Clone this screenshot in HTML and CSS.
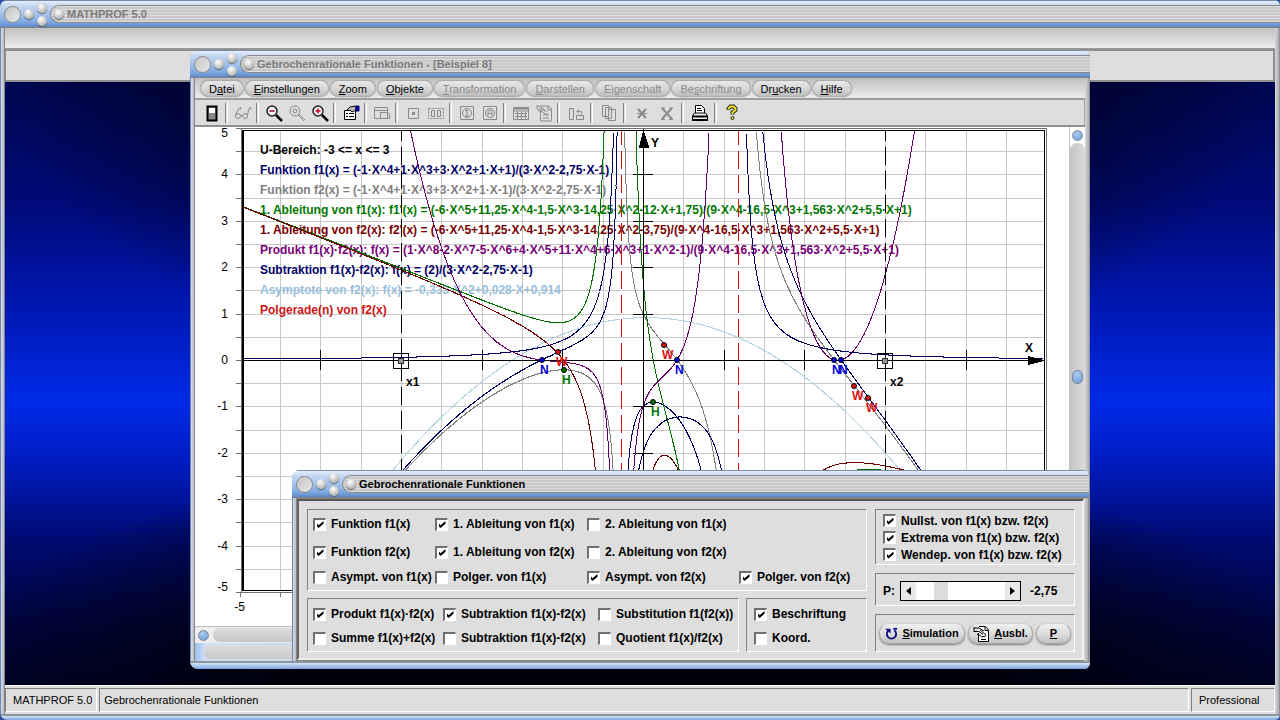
FILE: index.html
```html
<!DOCTYPE html>
<html lang="de">
<head>
    <meta charset="UTF-8">
    <meta name="viewport" content="width=device-width, initial-scale=1.0">
    <title>MATHPROF 5.0</title>
    <link rel="stylesheet" href="styles.css">
</head>
<body>
    <div class="window app">
        <header class="titlebar">
            <i class="knob big"></i><i class="knob"></i>
            <span class="pair"><i class="knob"></i><i class="knob"></i></span>
            <div class="caption off"><i class="knob"></i><span>MATHPROF 5.0</span></div>
        </header>
        <div class="app-body">
            <div class="menu-strip"></div>
            <div class="app-tools"></div>
            <main class="desktop"></main>
            <footer class="status">
                <span>MATHPROF 5.0</span>
                <span class="grow">Gebrochenrationale Funktionen</span>
                <span class="edition">Professional</span>
            </footer>
        </div>
        <div class="app-edge"></div>
    </div>

    <!-- Grafikfenster -->
    <section class="window graph">
        <header class="titlebar">
            <i class="knob big"></i><i class="knob"></i>
            <span class="pair"><i class="knob"></i><i class="knob"></i></span>
            <div class="caption off"><i class="knob"></i><span>Gebrochenrationale Funktionen - [Beispiel 8]</span></div>
        </header>
        <div class="window-body">
            <nav class="menu-strip">
                <button>D<u>a</u>tei</button>
                <button><u>E</u>instellungen</button>
                <button><u>Z</u>oom</button>
                <button><u>O</u>bjekte</button>
                <button disabled><u>T</u>ransformation</button>
                <button disabled><u>D</u>arstellen</button>
                <button disabled>Ei<u>g</u>enschaft</button>
                <button disabled>Be<u>s</u>chriftung</button>
                <button>Dr<u>u</u>cken</button>
                <button><u>H</u>ilfe</button>
            </nav>
            <div class="toolbar">
                <button aria-label="Beenden"><svg viewBox="0 0 18 18"><path d="M4.500 2.500h9v14h-9z" fill="#888" stroke="#000" stroke-width="2"/><path d="M6 4h6v5H6z" fill="#fff"/></svg></button>
                <i class="sep"></i>
                <button disabled aria-label="Ansicht"><svg viewBox="0 0 18 18" fill="none" stroke="#8a8a8a"><circle cx="4" cy="12" r="2.500"/><circle cx="11" cy="12" r="2.500"/><path d="M6.500 11.500h2M1.500 11L5 4.500l1.500-1v2M13.500 11L15 4.500l2-1v2"/></svg></button>
                <i class="sep"></i>
                <button aria-label="Verkleinern"><svg viewBox="0 0 18 18" fill="none"><circle cx="7" cy="7" r="5" stroke="#222" stroke-width="1.500" fill="#f4f4f4"/><path d="M11 11l6 6" stroke="#000" stroke-width="2.500"/><path d="M4.500 7h5" stroke="#a00020" stroke-width="1.500"/></svg></button>
                <button disabled aria-label="Zoom"><svg viewBox="0 0 18 18" fill="none" stroke="#8a8a8a"><circle cx="7" cy="7" r="5"/><circle cx="7" cy="7" r="2"/><path d="M11 10l6 6M10 11l6 6"/></svg></button>
                <button aria-label="Vergrößern"><svg viewBox="0 0 18 18" fill="none"><circle cx="7" cy="7" r="5" stroke="#222" stroke-width="1.500" fill="#f4f4f4"/><path d="M11 11l6 6" stroke="#000" stroke-width="2.500"/><path d="M4.500 7h5M7 4.500v5" stroke="#d00020" stroke-width="1.500"/></svg></button>
                <i class="sep"></i>
                <button aria-label="Eigenschaften"><svg viewBox="0 0 18 18" fill="none" stroke="#000"><path d="M2.500 6.500h11v9h-11z" fill="#fff"/><path d="M4 9.500h2M7 9.500h5M4 12.500h2M7 12.500h5"/><path d="M5 6l3-3 6-1v4l-4 2-2-2" fill="#bbb"/><path d="M14 2h3v5h-3z" fill="#000080" stroke="#000080"/></svg></button>
                <i class="sep"></i>
                <button disabled aria-label="Fenster"><svg viewBox="0 0 18 18" fill="none" stroke="#8a8a8a"><path d="M1.500 3.500h13v11h-13zM1.500 6.500h13M7.500 8.500h7l2 2v4h-9z"/></svg></button>
                <i class="sep"></i>
                <button disabled aria-label="Punkt"><svg viewBox="0 0 18 18" fill="none" stroke="#8a8a8a"><path d="M4.500 4.500h10v10h-10z"/><path d="M8 8h3v3H8z" fill="#8a8a8a" stroke="none"/></svg></button>
                <button disabled aria-label="Punkte"><svg viewBox="0 0 18 18" fill="none" stroke="#8a8a8a"><path d="M1.500 4.500h15v10h-15z" stroke-dasharray="2 1"/><path d="M4.500 6.500h3v6h-3zM10.500 6.500h3v6h-3z"/></svg></button>
                <i class="sep"></i>
                <button disabled aria-label="Info"><svg viewBox="0 0 18 18" fill="none" stroke="#8a8a8a"><path d="M2.500 2.500h13v13h-13z"/><circle cx="9" cy="9" r="4.500"/><path d="M7 6.500h3M9 6v6M7 12h4"/></svg></button>
                <button disabled aria-label="Text"><svg viewBox="0 0 18 18" fill="none" stroke="#8a8a8a"><path d="M2.500 2.500h13v13h-13z"/><circle cx="9" cy="9" r="4.500"/><path d="M7 12V7l2-1 2 1v5M7 9.500h4"/></svg></button>
                <i class="sep"></i>
                <button disabled aria-label="Wertetabelle"><svg viewBox="0 0 18 18" fill="none" stroke="#8a8a8a"><path d="M1.500 3.500h15v12h-15zM1.500 7h15M3 9.500h12M3 12.500h12M5.500 8v7M9.500 8v7M13.500 8v7"/><path d="M2 4.500h14" stroke-width="2"/></svg></button>
                <button disabled aria-label="Protokoll"><svg viewBox="0 0 18 18" fill="none" stroke="#8a8a8a"><path d="M5.500 7v10h11V5l-3-3h-12l2 5h3M13 2v4h4M4 4l6 3M6 3l6 5M8 11l6-1M8 14h6M5 6l8 6"/></svg></button>
                <i class="sep"></i>
                <button disabled class="wide" aria-label="Tauschen"><svg viewBox="0 0 18 18" fill="none" stroke="#8a8a8a"><path d="M2.500 4.500h4v11h-4zM9.500 11.500h7v4h-7zM10 7.500h4.500v3M12 5l-2 2.500 2 2"/></svg></button>
                <i class="sep"></i>
                <button disabled class="wide" aria-label="Seiten"><svg viewBox="0 0 18 18" fill="none" stroke="#8a8a8a"><path d="M2.500 1.500h6v11h-6zM5.500 3.500h6v11h-6zM8.500 5.500h7v11h-7z" fill="#dedede"/></svg></button>
                <i class="sep"></i>
                <button disabled class="wide" aria-label="Löschen"><svg viewBox="0 0 18 18" fill="none" stroke="#8a8a8a"><path d="M5 5l8 9M13 5l-8 9" stroke-width="2"/><path d="M4 9.500h10"/></svg></button>
                <button disabled class="wide" aria-label="Alles löschen"><svg viewBox="0 0 18 18" fill="none" stroke="#8a8a8a"><path d="M4 4l10 11M14 4L4 15" stroke-width="2"/><path d="M3 4h4M11 4h4M3 15.500h4M11 15.500h4"/></svg></button>
                <i class="sep"></i>
                <button class="wide" aria-label="Drucken"><svg viewBox="0 0 18 18" fill="none" stroke="#000"><path d="M4.500 9V1.500h6l3 3V9" fill="#fff"/><path d="M6 4.500h4M6 6.500h5"/><path d="M1.500 12l2-3h11l2 3v4h-15z" fill="#eee"/><path d="M1 12.500h16M1 16h16" stroke-width="2"/></svg></button>
                <i class="sep"></i>
                <button class="wide" aria-label="Hilfe"><svg viewBox="0 0 18 18" fill="none"><path d="M4.500 6V4.500l2-2h3l2 2V6L8.500 8.500v2" stroke="#222" stroke-width="4"/><path d="M4.500 5.500v-1l2-2h3l2 2V6L8.500 8.500V10" stroke="#f4e020" stroke-width="2"/><circle cx="8.500" cy="14" r="1.500" fill="#f4e020" stroke="#222"/></svg></button>
            </div>
            <div class="client">
                <svg id="plot" class="plot" width="874" height="499" viewBox="-448 -233 874 499">
                    <g id="grid" class="grid"></g>
                    <g class="frame">
                        <path class="thin" d="M-402 -231.500H403.500V232.500H-402z"/>
                        <path d="M-400 -229.500H401.500V230.500H-400z"/>
                        <path class="thick" d="M-400 -230V231"/>
                    </g>
                    <g id="scale" class="scale"></g>
                    <g class="legend">
                        <text x="-383" y="-206">U-Bereich: -3 &lt;= x &lt;= 3</text>
                        <text class="f1" x="-383" y="-186">Funktion f1(x) = (-1·X^4+1·X^3+3·X^2+1·X+1)/(3·X^2-2,75·X-1)</text>
                        <text class="f2" x="-383" y="-166">Funktion f2(x) = (-1·X^4+1·X^3+3·X^2+1·X-1)/(3·X^2-2,75·X-1)</text>
                        <text class="d1" x="-383" y="-146">1. Ableitung von f1(x): f1'(x) = (-6·X^5+11,25·X^4-1,5·X^3-14,25·X^2-12·X+1,75)/(9·X^4-16,5·X^3+1,563·X^2+5,5·X+1)</text>
                        <text class="d2" x="-383" y="-126">1. Ableitung von f2(x): f2'(x) = (-6·X^5+11,25·X^4-1,5·X^3-14,25·X^2-3,75)/(9·X^4-16,5·X^3+1,563·X^2+5,5·X+1)</text>
                        <text class="prod" x="-383" y="-106">Produkt f1(x)·f2(x): f(x) = (1·X^8-2·X^7-5·X^6+4·X^5+11·X^4+6·X^3+1·X^2-1)/(9·X^4-16,5·X^3+1,563·X^2+5,5·X+1)</text>
                        <text class="sub" x="-383" y="-86">Subtraktion f1(x)-f2(x): f(x) = (2)/(3·X^2-2,75·X-1)</text>
                        <text class="asy" x="-383" y="-66">Asymptote von f2(x): f(x) = -0,333·X^2+0,028·X+0,914</text>
                        <text class="pole" x="-383" y="-46">Polgerade(n) von f2(x)</text>
                    </g>
                    <g id="curves" class="curves"></g>
                    <g class="axes">
                        <path d="M-400 0.500H401M0.500 230V-229"/>
                        <path d="M401 0.500l-16 -4v8zM0.500 -229l-4 16h9z" fill="#000"/>
                        <text x="382" y="-8">X</text>
                        <text x="8" y="-213">Y</text>
                    </g>
                    <g class="bounds">
                        <path class="dash" d="M-241.500 -229V230M242.500 -229V230"/>
                        <path d="M-249.500 -6.500h15v15h-15zM234.500 -6.500h15v15h-15z"/>
                        <circle cx="-242" cy="1" r="3"/>
                        <circle cx="242" cy="1" r="3"/>
                        <text x="-237" y="26">x1</text>
                        <text x="247" y="26">x2</text>
                    </g>
                    <g id="marks" class="marks"></g>
                </svg>
                <div class="vscroll">
                    <button class="dot" aria-label="Nach oben"></button>
                    <div class="track"><i class="dot"></i></div>
                </div>
            </div>
            <div class="hscroll">
                <button class="dot" aria-label="Nach links"></button>
                <div class="track"></div>
            </div>
            <div class="hint"><div class="track"></div></div>
        </div>
        <div class="edge"></div>
    </section>

    <!-- Steuerdialog -->
    <section class="window dialog">
        <header class="titlebar">
            <i class="knob big"></i><i class="knob"></i>
            <span class="pair"><i class="knob"></i><i class="knob"></i></span>
            <div class="caption"><i class="knob"></i><span>Gebrochenrationale Funktionen</span></div>
        </header>
        <form class="panel">
            <div class="left">
                <div class="box functions">
                    <label><input type="checkbox" checked>Funktion f1(x)</label>
                    <label><input type="checkbox" checked>1. Ableitung von f1(x)</label>
                    <label class="last"><input type="checkbox">2. Ableitung von f1(x)</label>
                    <label><input type="checkbox" checked>Funktion f2(x)</label>
                    <label><input type="checkbox" checked>1. Ableitung von f2(x)</label>
                    <label class="last"><input type="checkbox">2. Ableitung von f2(x)</label>
                    <label><input type="checkbox">Asympt. von f1(x)</label>
                    <label><input type="checkbox">Polger. von f1(x)</label>
                    <label><input type="checkbox" checked>Asympt. von f2(x)</label>
                    <label><input type="checkbox" checked>Polger. von f2(x)</label>
                </div>
                <div class="row">
                    <div class="box combos">
                        <label><input type="checkbox" checked>Produkt f1(x)·f2(x)</label>
                        <label><input type="checkbox" checked>Subtraktion f1(x)-f2(x)</label>
                        <label><input type="checkbox">Substitution f1(f2(x))</label>
                        <label><input type="checkbox">Summe f1(x)+f2(x)</label>
                        <label><input type="checkbox">Subtraktion f1(x)-f2(x)</label>
                        <label><input type="checkbox">Quotient f1(x)/f2(x)</label>
                    </div>
                    <div class="box captions">
                        <label><input type="checkbox" checked>Beschriftung</label>
                        <label><input type="checkbox">Koord.</label>
                    </div>
                </div>
            </div>
            <div class="right">
                <div class="box points">
                    <label><input type="checkbox" checked>Nullst. von f1(x) bzw. f2(x)</label>
                    <label><input type="checkbox" checked>Extrema von f1(x) bzw. f2(x)</label>
                    <label><input type="checkbox" checked>Wendep. von f1(x) bzw. f2(x)</label>
                </div>
                <div class="box param">
                    <label for="p">P:</label>
                    <div class="slider">
                        <button type="button" aria-label="Kleiner"><svg viewBox="0 0 5 8"><path d="M5 0v8L0 4z"/></svg></button>
                        <input type="range" id="p" min="-5" max="5" step="0.05" value="-2.6">
                        <button type="button" aria-label="Größer"><svg viewBox="0 0 5 8"><path d="M0 0v8l5-4z"/></svg></button>
                    </div>
                    <output for="p">-2,75</output>
                </div>
                <div class="box actions">
                    <button type="button"><svg viewBox="0 0 14 14" fill="none"><path d="M4 3.500a5 5 0 1 0 6 0" stroke="#101080" stroke-width="2"/><path d="M0 2h6v5z" fill="#101080"/><path d="M9 2h4" stroke="#101080" stroke-width="2"/></svg><span><u>S</u>imulation</span></button>
                    <button type="button"><svg class="sheet" viewBox="0 0 17 17" fill="none" stroke="#000"><path d="M5.500 8v8.500h10V5l-3-3.500H6M12 2v3.500h4" fill="#fff"/><path d="M1 2v5M1 3h5l5 3M1 6.500h5l4 3M7 5l6 5M8 12l5-1M8 14.500h5M4 9l4 2"/></svg><span><u>A</u>usbl.</span></button>
                    <button type="button" class="short"><u>P</u></button>
                </div>
            </div>
        </form>
        <div class="edge"></div>
    </section>

    <script src="script.js"></script>
</body>
</html>
```
FILE: styles.css
```css
* {
    box-sizing: border-box;
}

body {
    margin: 0;
    height: 100vh;
    position: relative;
    overflow: hidden;
    background: #2f52a8;
    font: 11px/14px "Liberation Sans", Arial, sans-serif;
    color: #000;
}

button, input, output {
    font: inherit;
    color: inherit;
    margin: 0;
}

button {
    padding: 0;
    border: 0;
    background: none;
}

/* windows */
.window {
    display: flex;
    flex-direction: column;
    border-radius: 8px 6px 6px 8px;
    overflow: hidden;
    background: linear-gradient(90deg, #7088b8 0, #7088b8 1px, #d4dae8 1px, #b8bcc4 4px, #868686 4px, #868686 calc(100% - 5px), #d8d8d8 calc(100% - 5px), #a8acb4 calc(100% - 1px), #777 100%);
}

.app {
    height: 100vh;
}

.graph {
    position: absolute;
    left: 190px;
    top: 50px;
    width: 900px;
}

.dialog {
    position: absolute;
    left: 292px;
    top: 470px;
    width: 797px;
}

.titlebar {
    display: flex;
    align-items: center;
    gap: 3px;
    height: 28px;
    flex: none;
    padding-left: 4px;
    border-top: 1px solid #7c8ca8;
    border-bottom: 1px solid #808080;
    background: linear-gradient(#e4eefc 0, #c4d6f0 5px, #a0c0ea 14px, #78a4de 22px, #5c88c8 26px);
}

.knob {
    width: 10px;
    height: 10px;
    flex: none;
    border-radius: 50%;
    background: radial-gradient(circle at 40% 30%, #fff, #ccc 50%, #999);
    box-shadow: 0 1px 1px #566;
}

.knob.big {
    width: 17px;
    height: 17px;
    border: 1px solid #888;
    background: linear-gradient(135deg, #c4c4c4, #e8e8e8);
    box-shadow: none;
}

.pair {
    display: flex;
    flex-direction: column;
    gap: 3px;
}

.caption {
    flex: 1;
    display: flex;
    align-items: center;
    gap: 3px;
    height: 18px;
    padding-left: 3px;
    border: 1px solid #888;
    border-right: 0;
    border-radius: 9px 0 0 9px;
    background: repeating-linear-gradient(#dcdcdc 0, #dcdcdc 1px, #c8c8c8 1px, #c8c8c8 3px);
    font-weight: bold;
    font-size: 11px;
}

.caption.off {
    color: #7c7c7c;
}

.app-body {
    flex: 1;
    display: flex;
    flex-direction: column;
    margin: 0 5px;
}

.menu-strip {
    display: flex;
    gap: 1px;
    height: 21px;
    padding: 2px 5px 2px;
    background: linear-gradient(#c0c0c0, #ececec);
    border-bottom: 1px solid #999;
}

.menu-strip button {
    height: 17px;
    padding: 0 8px;
    border-radius: 9px;
    border: 1px solid #aaa;
    background: linear-gradient(#e8e8e8, #d4d4d4 60%, #bcbcbc);
    box-shadow: 0 0 1px #777;
}

.menu-strip button:disabled {
    color: #8a8a8a;
}

.app-tools {
    height: 33px;
    border: 2px solid #909090;
    border-left-width: 1px;
    background: #dedede;
}

.desktop {
    flex: 1;
    background:
        radial-gradient(ellipse 50% 50% at 50% 0, rgba(0, 0, 16, 0.8) 50%, transparent),
        radial-gradient(ellipse 55% 40% at 50% 100%, rgba(0, 0, 8, 0.9) 50%, transparent),
        linear-gradient(#000650, #000a78 20%, #0018b4 38%, #002ae8 53%, #001cc0 63%, #000a70 76%, #000440 90%, #000228);
}

.status {
    display: flex;
    gap: 2px;
    padding: 2px 0;
    background: #dedede;
    border-top: 1px solid #fff;
}

.status span {
    padding: 4px 4px 4px 7px;
    border: 1px solid #fff;
    border-color: #808080 #fff #fff #808080;
}

.status .grow {
    flex: 1;
    padding-left: 4px;
}

.status .edition {
    width: 84px;
}

.app-edge, .edge {
    height: 8px;
    flex: none;
    border-top: 2px solid #8c949c;
    background: linear-gradient(#d4e4f8, #7ca4dc);
}

.app-edge {
    height: 6px;
}

/* graph window */
.window-body {
    margin: 0 5px;
    background: #dedede;
}

.toolbar {
    display: flex;
    align-items: center;
    height: 28px;
    padding-left: 5px;
    border: 1px solid #a0a0a0;
    border-bottom: 2px solid #909090;
    border-left: 0;
    background: #dedede;
}

.toolbar button {
    display: flex;
    justify-content: center;
    width: 23px;
}

.toolbar .wide {
    width: 25px;
}

.toolbar svg {
    width: 18px;
    height: 18px;
}

.sep {
    width: 2px;
    height: 20px;
    margin: 0 3px 0 2px;
    border-left: 1px solid #808080;
    border-right: 1px solid #fff;
    box-sizing: content-box;
    width: 0;
    padding-left: 1px;
}

.client {
    display: flex;
    height: 499px;
    background: #fff;
}

.plot {
    flex: none;
    shape-rendering: crispEdges;
}

.plot text {
    font-size: 12px;
    font-weight: bold;
}

.plot path, .plot polyline {
    fill: none;
    stroke: #000;
}

.grid path { stroke: #c8c8c8; }
.frame .thin { stroke: #707070; }
.frame .thick { stroke-width: 2px; }
.scale path { stroke: #707070; }
.scale .cross { stroke: #000; }
.plot .scale text { font-weight: normal; text-anchor: end; }
.axes path[fill] { fill: #000; }
.bounds .dash { stroke-dasharray: 18 6; stroke-dashoffset: 8; }
.bounds circle { fill: #999; stroke: #333; }

.legend .f1, .legend .sub { fill: #000068; }
.legend .f2 { fill: #808080; }
.legend .d1 { fill: #007800; }
.legend .d2 { fill: #780000; }
.legend .prod { fill: #780078; }
.legend .asy { fill: #98c0dc; }
.legend .pole { fill: #cc1414; }

.curves .f1, .curves .sub { stroke: #000060; }
.curves .f2 { stroke: #808080; }
.curves .d1 { stroke: #007000; }
.curves .d2 { stroke: #700000; }
.curves .prod { stroke: #680068; }
.curves .asy { stroke: #b4d4e4; }
.curves .pole { stroke: #e01010; stroke-dasharray: 18 6; stroke-dashoffset: 4; }

.marks circle { stroke: #000; stroke-width: 1px; shape-rendering: auto; }
.marks .n { fill: #0000e0; }
.marks .h { fill: #007800; }
.marks .w { fill: #e01010; }

.vscroll {
    flex: 1;
    display: flex;
    flex-direction: column;
    align-items: center;
    gap: 2px;
    padding-top: 3px;
    border-left: 1px solid #c4c4c4;
}

.track {
    flex: 1;
    background: linear-gradient(90deg, #c4c4c4, #dadada);
}

.vscroll .track {
    width: 100%;
    display: flex;
    align-items: center;
    justify-content: center;
    padding-bottom: 16px;
    border-radius: 7px 7px 0 0;
}

.dot {
    width: 11px;
    height: 11px;
    flex: none;
    border-radius: 50%;
    border: 1px solid #889;
    background: radial-gradient(circle at 40% 30%, #a8ccf0, #6c9cd8);
}

.track .dot {
    height: 14px;
    border-radius: 5px;
}

.hscroll {
    display: flex;
    align-items: center;
    gap: 4px;
    height: 17px;
    padding-left: 3px;
    background: #eee;
    border-top: 1px solid #bbb;
}

.hscroll .track, .hint .track {
    height: 14px;
    border-radius: 7px 0 0 7px;
    background: linear-gradient(#dcdcdc, #c8c8c8);
}

.hint {
    display: flex;
    height: 18px;
    padding: 2px 0 2px 9px;
    background: linear-gradient(90deg, #9cc0ec, #d0dff4 10px, #bbb);
}

/* dialog */
.panel {
    display: flex;
    gap: 8px;
    margin: 1px 5px;
    padding: 8px 7px 6px 8px;
    background: #dedede;
    border: 2px solid #555;
    border-color: #555 #eee #eee #666;
    font-size: 12px;
    font-weight: bold;
}

.left {
    flex: 1;
    display: flex;
    flex-direction: column;
    gap: 7px;
}

.right {
    width: 200px;
    display: flex;
    flex-direction: column;
    gap: 8px;
}

.row {
    display: flex;
    gap: 7px;
}

.box {
    border: 1px solid #fff;
    border-color: #808080 #fff #fff #808080;
    padding: 0 6px;
}

.box label {
    display: flex;
    align-items: center;
    gap: 5px;
    white-space: nowrap;
}

.functions {
    display: grid;
    grid-template-columns: 122px 152px 152px 1fr;
    grid-template-rows: 28px 28px 22px;
    padding: 0 0 2px 5px;
}

.functions .last {
    grid-column: 3 / 5;
}

.combos {
    flex: 1;
    display: grid;
    grid-template-columns: 130px 155px 1fr;
    grid-template-rows: 24px 24px;
    padding: 3px 0 1px 5px;
}

.captions {
    width: 121px;
    padding: 3px 7px 1px;
}

.captions label {
    height: 24px;
}

.points {
    padding: 2px 7px 1px;
}

.points label {
    height: 17px;
}

.param {
    display: flex;
    align-items: center;
    gap: 5px;
    height: 33px;
    padding: 2px 7px 0;
}

.param output {
    padding-left: 4px;
}

.slider {
    display: flex;
    width: 121px;
    height: 20px;
    border: 1px solid #000;
    background: #fff;
}

.slider button {
    width: 15px;
    display: flex;
    align-items: center;
    justify-content: center;
    background: #e8e8e8;
}

.slider svg {
    width: 5px;
    height: 8px;
}

.slider input {
    flex: 1;
    min-width: 0;
    appearance: none;
    background: #fff;
}

.slider input::-webkit-slider-thumb {
    appearance: none;
    width: 14px;
    height: 18px;
    background: #dcdcdc;
}

.actions {
    flex: 1;
    display: flex;
    align-items: center;
    gap: 3px;
    padding: 0 3px;
    font-size: 11px;
}

.actions button {
    display: flex;
    align-items: center;
    justify-content: center;
    gap: 4px;
    height: 21px;
    width: 86px;
    border-radius: 10px;
    border: 1px solid #aaa;
    border-top-color: #d4d4d4;
    background: linear-gradient(#f0f0f0, #d8d8d8 60%, #c0c0c0);
    box-shadow: 0 1px 2px #777;
}

.actions button:nth-child(2) {
    width: 65px;
}

.actions .short {
    width: 35px;
}

.actions svg {
    width: 13px;
    height: 13px;
}

.actions .sheet {
    width: 17px;
    height: 17px;
}

input[type="checkbox"] {
    appearance: none;
    display: grid;
    place-items: center;
    width: 13px;
    height: 13px;
    flex: none;
    background: #fff;
    border: 2px solid #707070;
    border-right: 1px solid #fff;
    border-bottom: 1px solid #fff;
}

input[type="checkbox"]:checked::before {
    content: "";
    width: 7px;
    height: 7px;
    background: #000;
    clip-path: polygon(0 30%, 30% 60%, 100% 0, 100% 40%, 30% 100%, 0 70%);
}
```
FILE: script.js
```js
const SX = 80.7;   // px je Einheit
const SY = 46.4;

const nenner = x => 3 * x * x - 2.75 * x - 1;
const f1 = x => (-(x ** 4) + x ** 3 + 3 * x * x + x + 1) / nenner(x);
const f2 = x => (-(x ** 4) + x ** 3 + 3 * x * x + x - 1) / nenner(x);
const ableitung = f => x => (f(x + 1e-5) - f(x - 1e-5)) / 2e-5;

const pole = [-0.2788, 1.1955];

const kurven = [
    ['asy', x => -0.333 * x * x + 0.028 * x + 0.914],
    ['f2', f2],
    ['f1', f1],
    ['d1', ableitung(f1)],
    ['d2', ableitung(f2)],
    ['prod', x => f1(x) * f2(x)],
    ['sub', x => 2 / nenner(x)]
];

function add(parent, name, attrs, text) {
    const el = document.createElementNS('http://www.w3.org/2000/svg', name);
    for (const key in attrs) {
        el.setAttribute(key, attrs[key]);
    }
    if (text) {
        el.textContent = text;
    }
    document.getElementById(parent).appendChild(el);
}

function drawGrid() {
    for (let i = -9; i < 10; i++) {
        const x = Math.round(i * SX / 2) + 0.5;
        const y = Math.round(i * SY / 2) + 0.5;
        add('grid', 'path', { d: `M${x} -229V230M-400 ${y}H401` });
    }
    for (let i = -10; i <= 10; i++) {
        const y = Math.round(i * SY / 2) + 0.5;
        add('scale', 'path', { d: `M-407 ${y}h6` });
        add('scale', 'path', { d: `M${Math.round(i * SX / 2) + 0.5} 232v5` });
    }
    for (let i = -5; i <= 5; i++) {
        let y = Math.round(-i * SY) + 4;
        if (i === 5) y += 5;
        if (i === -5) y -= 5;
        add('scale', 'text', { x: -415, y: y }, String(i));
        if (i !== 0 && Math.abs(i) < 5) {
            add('scale', 'path', { class: 'cross', d: `M${Math.round(i * SX) + 0.5} -10v20M-10 ${Math.round(i * SY) + 0.5}h20` });
        }
    }
    add('scale', 'text', { x: -398, y: 251 }, '-5');
}

function drawCurve(name, f) {
    const top = 229 / SY;
    let points = [];
    const flush = () => {
        if (points.length > 1) {
            add('curves', 'polyline', { class: name, points: points.join(' ') });
        }
        points = [];
    };
    for (let x = -4.95; x <= 4.95; x += 0.001) {
        const y = f(x);
        const onPole = pole.some(p => Math.abs(x - p) < 0.001);
        if (onPole || Math.abs(y) > top) {
            flush();
        } else {
            points.push((x * SX).toFixed(1) + ',' + (-y * SY).toFixed(1));
        }
    }
    flush();
}

function drawMarks() {
    const marks = [
        ['n', -101, 0, 'N'], ['n', 34, 0, 'N'], ['n', 191, 0, 'N'], ['n', 198, 0, 'N'],
        ['h', -79, 10, 'H'], ['h', 10, 42, 'H'],
        ['w', -85, -8, 'W'], ['w', 21, -15, 'W'], ['w', 211, 26, 'W'], ['w', 225, 38, 'W']
    ];
    marks.forEach(([kind, x, y, text]) => {
        add('marks', 'circle', { class: kind, cx: x, cy: y, r: 2.5 });
        add('marks', 'text', { class: kind, x: x - 2, y: y + 14 }, text);
    });
}

drawGrid();
kurven.forEach(([name, f]) => drawCurve(name, f));
pole.forEach(p => {
    const x = Math.round(p * SX) + (p < 0 ? 0.5 : -0.5);
    add('curves', 'path', { class: 'pole', d: `M${x} -229V230` });
});
drawMarks();
```
